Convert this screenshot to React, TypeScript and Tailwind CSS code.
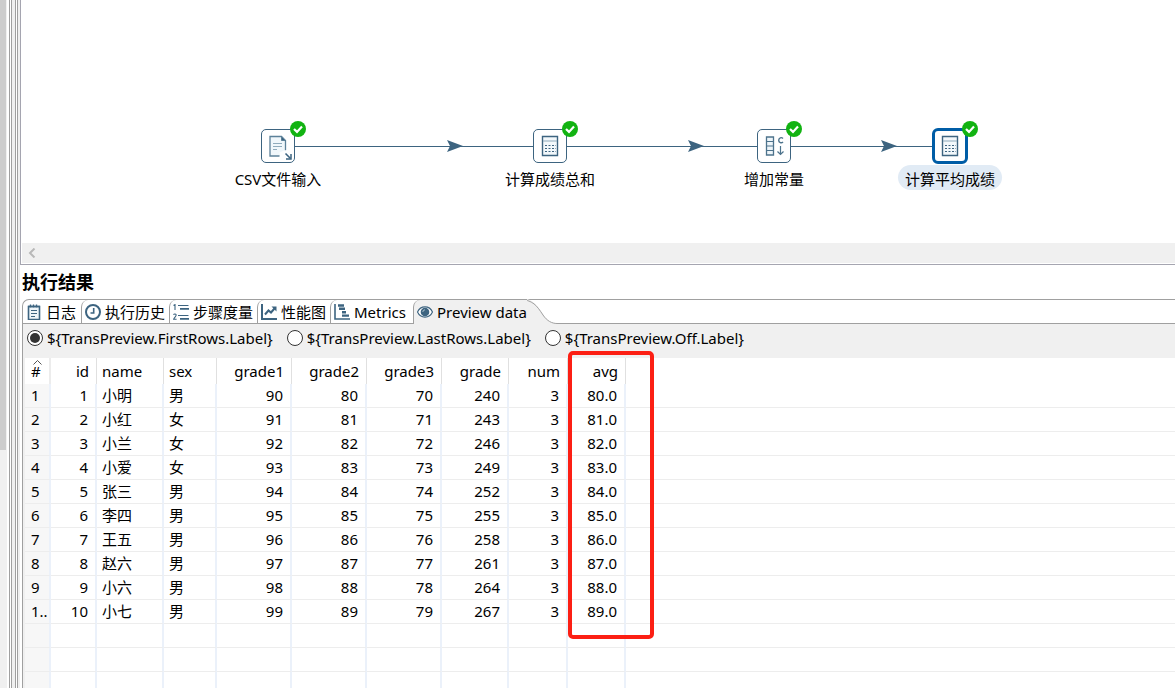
import React from 'react';
import clsx from 'clsx';

type IconProps = { className?: string };

const LogIcon = ({ className }: IconProps) => (
  <svg viewBox="0 0 16 16" className={className} fill="none" stroke="#3d6480">
    <path d="M2.5 2.5h11v13h-11z" strokeWidth="1.6" fill="#eef5f9" />
    <path d="M4.5 .5v3M7.5 .5v3M10.5 .5v3M2 2.5h12" strokeWidth="1.4" />
    <path d="M5 6.5h6M5 9.5h6M5 12.5h4" />
  </svg>
);

const HistoryIcon = ({ className }: IconProps) => (
  <svg viewBox="0 0 16 16" className={className} fill="none" stroke="#3d6480">
    <circle cx="8" cy="8" r="7" strokeWidth="2" />
    <path d="M8.7 4v5H5.5" strokeWidth="1.6" />
  </svg>
);

const StepsIcon = ({ className }: IconProps) => (
  <svg viewBox="0 0 16 16" className={className} fill="none" stroke="#3d6480">
    <path d="M.5 1.5 2 .6V6M.5 10.8c.6-1.2 2.8-1 2.6.4C3 12.4 1 14 .6 15.3h3" strokeWidth="1.1" />
    <path d="M5 1.5h10.5M5 11.5h10.5" />
    <path d="M7 4.8h9M7 14.8h9" strokeWidth="1.7" />
  </svg>
);

const ChartIcon = ({ className }: IconProps) => (
  <svg viewBox="0 0 16 16" className={className} fill="none" stroke="#3d6480">
    <path d="M1 0v15h15" strokeWidth="2" />
    <path d="M4 10.5 7.5 6.5l2.5 2 3.5-4" strokeWidth="2" />
    <path d="M10.5 2.5H15.5V7.5z" fill="#3d6480" stroke="none" />
  </svg>
);

const MetricsIcon = ({ className }: IconProps) => (
  <svg viewBox="0 0 16 16" className={className} fill="none" stroke="#3d6480">
    <path d="M1 0v15h15" strokeWidth="1.6" />
    <path d="M4 1.5h6M5 4.8h6M8 8.2h4M8 11.6h7" strokeWidth="2.4" />
  </svg>
);

const EyeIcon = ({ className }: IconProps) => (
  <svg viewBox="0 0 16 16" className={className}>
    <path d="M.5 8C3.5 1.2 12.5 1.2 15.5 8 12.5 14.8 3.5 14.8.5 8z" fill="#fff" stroke="#3d6480" strokeWidth="1.2" />
    <circle cx="8" cy="8" r="4.3" fill="#3d6480" />
    <path d="M5.8 8A2.2 2.2 0 0 1 8 5.8" fill="none" stroke="#c5d5df" strokeWidth=".8" />
  </svg>
);

const CsvIcon = () => (
  <svg viewBox="0 0 32 32" className="size-8" fill="none" stroke="#5c8199">
    <path d="M17.5 26H8V6.5h11.500l4 4v10" strokeWidth="1.3" fill="#f0f7fb" />
    <path d="M19.5 6.5v4h4z" fill="#3d6480" />
    <path d="M11 13.5h9M11 16.5h9M11 19.5h4" stroke="#8fabbc" />
    <path d="M17.500 22.500 22 20.500l8-.5v10H19z" fill="#fff" stroke="none" />
    <path d="m23.5 23.5 5 5" strokeWidth="1.6" stroke="#3d6480" />
    <path d="M29 24v5h-5" strokeWidth="1.5" stroke="#3d6480" />
  </svg>
);

const CalculatorIcon = () => (
  <svg viewBox="0 0 32 32" className="size-8" fill="none" stroke="#3d6480">
    <path d="M8.5 6.5h15v19h-15z" fill="#f3f8fb" strokeWidth="1.4" />
    <path d="M9 11h14" stroke="#8fabbc" />
    <path d="M11 15.5h11M11 18.5h11M11 21.5h11" strokeDasharray="2 1.5" />
  </svg>
);

const ConstantIcon = () => (
  <svg viewBox="0 0 32 32" className="size-8" fill="none" stroke="#4d738c">
    <path d="M8.5 7h7v18h-7z" strokeWidth="1.3" fill="#eef5f9" />
    <path d="M8.5 11.5h7M8.5 16h7M8.5 20.5h7" />
    <path d="M25 8.5c-1.5-1.6-4.3-.8-4.3 1.700s2.8 3.3 4.3 1.700" strokeWidth="1.4" />
    <path d="M22.5 16v8.5M19.5 21.5l3 3 3-3" strokeWidth="1.2" />
  </svg>
);

const CheckBadge = () => (
  <svg viewBox="0 0 16 16" className="absolute -top-2 -right-[11px] size-4">
    <circle cx="8" cy="8" r="8" fill="#12b312" />
    <path d="m4 8 3 2.900 5-5.400" fill="none" stroke="#fff" strokeWidth="2.2" />
  </svg>
);

interface StepProps {
  label: string;
  icon: React.ReactNode;
  selected?: boolean;
  className: string;
}

const Step = ({ label, icon, selected, className }: StepProps) => (
  <div className={clsx('absolute top-[129px] flex w-28 -translate-x-1/2 flex-col items-center', className)}>
    <div className="relative">
      <div
        className={clsx(
          'flex size-[34px] items-center justify-center rounded-[5px] border border-[#3d6480] bg-white',
          selected && 'outline-3 outline-offset-[-2px] outline-[#005da6]'
        )}
      >
        {icon}
      </div>
      <CheckBadge />
    </div>
    <span
      className={clsx('mt-0.5 h-[25px] rounded-full px-[7px] leading-7 whitespace-nowrap', selected && 'bg-[#e1ebf5]')}
    >
      {label}
    </span>
  </div>
);

const tabs = [
  { label: '日志', Icon: LogIcon, width: 'w-[58px]' },
  { label: '执行历史', Icon: HistoryIcon, width: 'w-[88px]' },
  { label: '步骤度量', Icon: StepsIcon, width: 'w-[88px]' },
  { label: '性能图', Icon: ChartIcon, width: 'w-[73px]' },
  { label: 'Metrics', Icon: MetricsIcon, width: 'w-[83px]' }
];

const previewModes = [
  '${TransPreview.FirstRows.Label}',
  '${TransPreview.LastRows.Label}',
  '${TransPreview.Off.Label}'
];

const columns = [
  { name: 'id', width: 'w-[46px]', text: false },
  { name: 'name', width: 'w-[67px]', text: true },
  { name: 'sex', width: 'w-[53px]', text: true },
  { name: 'grade1', width: 'w-[75px]', text: false },
  { name: 'grade2', width: 'w-[75px]', text: false },
  { name: 'grade3', width: 'w-[75px]', text: false },
  { name: 'grade', width: 'w-[67px]', text: false },
  { name: 'num', width: 'w-[59px]', text: false },
  { name: 'avg', width: 'w-[58px]', text: false }
];

const rows = [
  ['1', '小明', '男', '90', '80', '70', '240', '3', '80.0'],
  ['2', '小红', '女', '91', '81', '71', '243', '3', '81.0'],
  ['3', '小兰', '女', '92', '82', '72', '246', '3', '82.0'],
  ['4', '小爱', '女', '93', '83', '73', '249', '3', '83.0'],
  ['5', '张三', '男', '94', '84', '74', '252', '3', '84.0'],
  ['6', '李四', '男', '95', '85', '75', '255', '3', '85.0'],
  ['7', '王五', '男', '96', '86', '76', '258', '3', '86.0'],
  ['8', '赵六', '男', '97', '87', '77', '261', '3', '87.0'],
  ['9', '小六', '男', '98', '88', '78', '264', '3', '88.0'],
  ['10', '小七', '男', '99', '89', '79', '267', '3', '89.0']
];

const emptyRows = [11, 12, 13];

const Gutter = () => (
  <div className="flex shrink-0">
    <div className="w-[7px] bg-[#f0f0f0]">
      <div className="h-[450px] w-[6px] bg-[#cdcdcd]" />
    </div>
    <div className="w-[3px] border-r border-[#a0a0a0]" />
    <div className="w-[2px] border-r border-[#a0a0a0]" />
    <div className="w-[4px] border-r border-[#a0a0a0] bg-[#f0f0f0]" />
    <div className="w-[2px] border-r border-[#a0a0a0]" />
    <div className="w-[2px] bg-[#f0f0f0]" />
  </div>
);

const Canvas = () => (
  <section className="border-b border-l border-[#a5a5b0]">
    <div className="relative h-[243px] overflow-hidden">
      <svg className="absolute inset-0 h-full w-full" fill="#3d6480" stroke="#3d6480">
        <path d="M274 146.5h238M546 146.5h190M770 146.5h142" />
        <path
          d="M426 140l16 6-16 6 3-6zM667 140l16 6-16 6 3-6zM860 140l16 6-16 6 3-6z"
          stroke="none"
        />
      </svg>
      <Step label="CSV文件输入" icon={<CsvIcon />} className="left-[257px]" />
      <Step label="计算成绩总和" icon={<CalculatorIcon />} className="left-[529px]" />
      <Step label="增加常量" icon={<ConstantIcon />} className="left-[753px]" />
      <Step label="计算平均成绩" icon={<CalculatorIcon />} className="left-[929px]" selected />
    </div>
    <div className="mb-px ml-px flex h-5 items-center bg-[#f0f0f0] pl-1.5">
      <svg viewBox="0 0 8 10" className="h-2.5 w-2" fill="none" stroke="#b8b8b8" strokeWidth="2">
        <path d="M6.5 .5 2 5l4.5 4.5" />
      </svg>
    </div>
  </section>
);

const TabBar = () => (
  <div role="tablist" className="flex h-[25px] rounded-tl-[7px] border-t border-l border-[#a0a0a0]">
    {tabs.map(({ label, Icon, width }, i) => (
      <button
        key={label}
        type="button"
        role="tab"
        aria-selected={false}
        className={clsx(
          'flex shrink-0 items-center gap-1 border-b border-[#a0a0a0] pl-[3px] whitespace-nowrap',
          width,
          i > 0 && 'rounded-tl-[7px] border-l'
        )}
      >
        <Icon className="size-4 shrink-0" />
        {label}
      </button>
    ))}
    <button
      type="button"
      role="tab"
      aria-selected
      className="flex shrink-0 items-center gap-1 rounded-tl-[7px] border-l border-[#a0a0a0] bg-[#f0f0f0] pl-[3px]"
    >
      <EyeIcon className="size-4" />
      Preview data
    </button>
    <svg viewBox="0 0 30 25" className="-mt-px h-[25px] w-[30px] shrink-0" aria-hidden="true">
      <path d="M0 0C8 2 12 9 17 17 20 22 25 24.5 30 24.5V25H0z" fill="#f0f0f0" />
      <path d="M-8 .5C6 .5 10 7 16 16 20 22 25 24.5 30 24.5" fill="none" stroke="#a0a0a0" />
    </svg>
    <div className="flex-1 border-b border-[#a0a0a0]" />
  </div>
);

const PreviewTable = () => (
  <div className="relative ml-0.5 bg-white">
    <table className="w-full table-fixed border-separate border-spacing-0">
      <thead>
        <tr className="h-[26px]">
          <th className="relative w-[26px] border-r-2 border-[#ececec] p-0 pl-1.5 text-left font-normal">
            <svg viewBox="0 0 8 5" className="absolute top-0.5 left-2 h-[5px] w-[9px]" fill="none" stroke="#555">
              <path d="M0 4.5 4 .5l4 4" />
            </svg>
            #
          </th>
          {columns.map(({ name, width, text }) => (
            <th
              key={name}
              className={clsx(
                'border-r border-[#e0e0e0] p-0 font-normal',
                width,
                text ? 'pl-[5px] text-left' : 'pr-[7px] text-right'
              )}
            >
              {name}
            </th>
          ))}
          <th className="p-0" />
        </tr>
      </thead>
      <tbody>
        {rows.map((row, r) => (
          <tr key={row[0]} className="h-6 leading-5">
            <td className="border-r-2 border-b border-r-[#ebf1fa] border-b-[#ededed] bg-[#f7f7f7] p-0 pb-0.5 pl-1.5">
              {r < 9 ? r + 1 : '1..'}
            </td>
            {row.map((value, c) => (
              <td
                key={columns[c].name}
                className={clsx(
                  'border-r-2 border-b border-r-[#ebf1fa] border-b-[#ededed] p-0 pb-0.5',
                  columns[c].text ? 'pl-[5px]' : 'pr-[7px] text-right'
                )}
              >
                {value}
              </td>
            ))}
            <td className="border-b border-[#ededed] p-0" />
          </tr>
        ))}
        {emptyRows.map((n) => (
          <tr key={n} className="h-6">
            <td className="border-r-2 border-b border-r-[#ebf1fa] border-b-[#ededed] bg-[#f7f7f7] p-0" />
            {columns.map(({ name }) => (
              <td key={name} className="border-r-2 border-b border-r-[#ebf1fa] border-b-[#ededed] p-0" />
            ))}
            <td className="border-b border-[#ededed] p-0" />
          </tr>
        ))}
      </tbody>
    </table>
    {/* Highlight around the avg column */}
    <div className="pointer-events-none absolute -top-[7px] left-[543px] h-[288px] w-[86px] rounded-[5px] border-4 border-[#fc1f14]" />
  </div>
);

export default function App() {
  return (
    <div className="flex h-screen overflow-hidden bg-white font-['Noto_Sans','Noto_Sans_CJK_SC',sans-serif] text-[15px] leading-[22px] text-black">
      <Gutter />
      <main className="flex min-w-0 flex-1 flex-col">
        <Canvas />
        <section className="flex min-h-0 flex-1 flex-col pl-0.5">
          <h2 className="flex h-[34px] items-center text-lg font-bold">执行结果</h2>
          <TabBar />
          <div className="min-h-0 flex-1 border-l border-[#a0a0a0] bg-[#f0f0f0]">
            <fieldset className="flex h-[34px] items-center gap-3.5 pb-1.5 pl-1">
              {previewModes.map((mode, i) => (
                <label key={mode} className="flex shrink-0 items-center gap-1">
                  <input
                    type="radio"
                    name="preview"
                    defaultChecked={i === 0}
                    className="size-4 appearance-none rounded-full border border-[#333] bg-white p-[2px] before:block before:size-full before:rounded-full checked:before:bg-[#333]"
                  />
                  {mode}
                </label>
              ))}
            </fieldset>
            <PreviewTable />
          </div>
        </section>
      </main>
    </div>
  );
}
